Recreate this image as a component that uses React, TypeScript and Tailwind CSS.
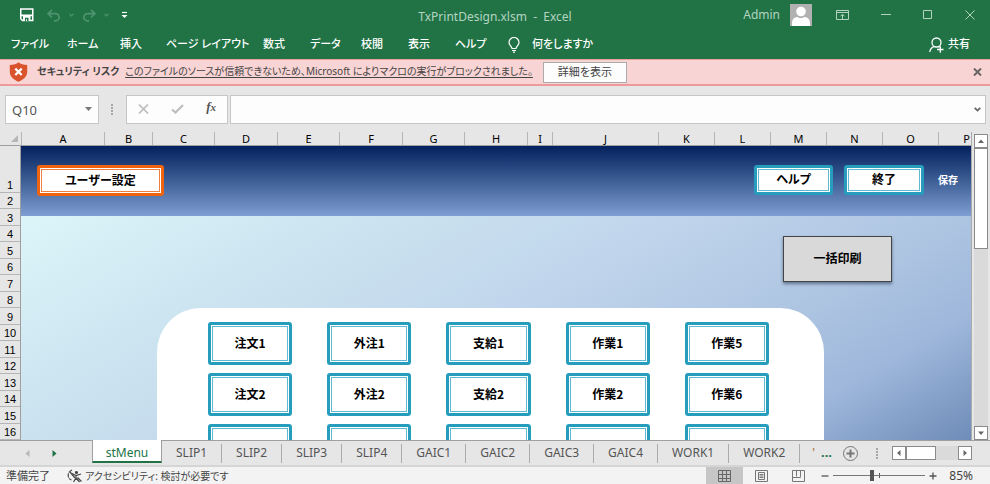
import { useState } from "react";
import type { ReactNode } from "react";

const RIBBON_TABS = [
  { label: "ファイル", width: "w-14" },
  { label: "ホーム", width: "w-[53px]" },
  { label: "挿入", width: "w-[46px]" },
  { label: "ページ レイアウト", width: "w-[97px]" },
  { label: "数式", width: "w-[47px]" },
  { label: "データ", width: "w-[51px]" },
  { label: "校閲", width: "w-[47px]" },
  { label: "表示", width: "w-[47px]" },
  { label: "ヘルプ", width: "w-[53px]" },
];

const COLUMNS = [
  { name: "A", width: "w-[83px]" },
  { name: "B", width: "w-12" },
  { name: "C", width: "w-[62px]" },
  { name: "D", width: "w-[63px]" },
  { name: "E", width: "w-[62px]" },
  { name: "F", width: "w-[63px]" },
  { name: "G", width: "w-[62px]" },
  { name: "H", width: "w-[63px]" },
  { name: "I", width: "w-[25px]" },
  { name: "J", width: "w-[106px]" },
  { name: "K", width: "w-14" },
  { name: "L", width: "w-14" },
  { name: "M", width: "w-14" },
  { name: "N", width: "w-14" },
  { name: "O", width: "w-14" },
  { name: "P", width: "w-14" },
];

const ROWS = Array.from({ length: 16 }, (_, i) => i + 1);

const MENU_ITEMS = [
  "注文1", "外注1", "支給1", "作業1", "作業5",
  "注文2", "外注2", "支給2", "作業2", "作業6",
];

const SHEETS = ["SLIP1", "SLIP2", "SLIP3", "SLIP4", "GAIC1", "GAIC2", "GAIC3", "GAIC4", "WORK1", "WORK2"];

export default function App() {
  return (
    <div className="flex h-screen flex-col overflow-hidden bg-[#e6e6e6] font-['Noto_Sans','Noto_Sans_CJK_JP',sans-serif] text-xs text-[#444] [font-feature-settings:'palt']">
      <TitleBar />
      <RibbonTabs />
      <SecurityBar />
      <FormulaBar />
      <main className="flex min-h-0 flex-1">
        <div className="flex min-w-0 flex-1 flex-col">
          <ColumnHeaders />
          <div className="flex min-h-0 flex-1">
            <RowHeaders />
            <Sheet />
          </div>
        </div>
        <VerticalScrollbar />
      </main>
      <SheetTabs />
      <StatusBar />
    </div>
  );
}

function TitleBar() {
  return (
    <header className="grid h-[30px] shrink-0 grid-cols-[1fr_auto_1fr] bg-[#217346] text-[#b3d3c0]">
      <div className="flex items-center pl-5">
        <button type="button" aria-label="上書き保存">
          <svg width="14" height="14" viewBox="0 0 14 14" className="block">
            <path d="M.75 1h12v11.500H2.500L.75 10.800z" fill="none" stroke="#fff" strokeWidth="1.500" />
            <path d="M.75 6.500h12v1.800h-12zM3 8h7.500v4.500H3z" fill="#fff" />
            <path d="M5 9.700h3.500v3.500H7v-2H6v2H5z" fill="#217346" />
          </svg>
        </button>
        <button type="button" aria-label="元に戻す" className="ml-[13px] flex items-center gap-2 text-[#4f9470]">
          <svg width="14" height="13" viewBox="0 0 14 13" fill="none" stroke="currentColor" strokeWidth="1.700">
            <path d="M5 .8 1 4.600l4 3.800M1 4.600h7.500a3.600 3.600 0 0 1 0 7.200H7" />
          </svg>
          <SmallChevron />
        </button>
        <button type="button" aria-label="やり直し" className="ml-2 flex items-center gap-2 text-[#4f9470]">
          <svg width="14" height="13" viewBox="0 0 14 13" fill="none" stroke="currentColor" strokeWidth="1.700">
            <path d="M9 .8l4 3.800-4 3.800M13 4.600H5.500a3.600 3.600 0 0 0 0 7.200H7" />
          </svg>
          <SmallChevron />
        </button>
        <button type="button" aria-label="クイック アクセス ツール バーのユーザー設定" className="ml-3 text-white">
          <svg width="7" height="8" viewBox="0 0 7 8" className="block">
            <path d="M1 1.500h5" stroke="currentColor" strokeWidth="1.200" />
            <path d="M.5 4h6L3.500 7z" fill="currentColor" />
          </svg>
        </button>
      </div>
      <h1 className="flex items-center pt-1 text-xs whitespace-pre">TxPrintDesign.xlsm  -  Excel</h1>
      <div className="flex items-center justify-end pr-[15px]">
        <span className="mr-2.5">Admin</span>
        <svg width="22" height="22" viewBox="0 0 22 22" className="mr-6 block">
          <path d="M0 0h22v22H0z" fill="#b1b1b1" />
          <circle cx="11" cy="7.500" r="4.800" fill="#fff" />
          <path d="M2 22v-3c0-4 3-6 5.500-6 1 .8 2 1.200 3.500 1.200s2.500-.4 3.500-1.200c2.500 0 5.500 2 5.500 6v3z" fill="#fff" />
        </svg>
        <button type="button" aria-label="リボンの表示オプション" className="mr-8">
          <svg width="13" height="10" viewBox="0 0 13 10" fill="none" stroke="currentColor" className="block">
            <path d="M.5.5h12v9H.5zM.5 2.500h12M6.500 9V4.500M4.500 6.300l2-2 2 2" />
          </svg>
        </button>
        <button type="button" aria-label="最小化" className="mr-8">
          <svg width="10" height="10" viewBox="0 0 10 10" stroke="currentColor" className="block">
            <path d="M0 4.500h10" />
          </svg>
        </button>
        <button type="button" aria-label="最大化" className="mr-8">
          <svg width="10" height="10" viewBox="0 0 10 10" fill="none" stroke="currentColor" className="block">
            <path d="M.5.5h8v8h-8z" />
          </svg>
        </button>
        <button type="button" aria-label="閉じる">
          <svg width="10" height="10" viewBox="0 0 10 10" stroke="currentColor" className="block">
            <path d="M.5.5l9 9M9.500.5l-9 9" />
          </svg>
        </button>
      </div>
    </header>
  );
}

function SmallChevron() {
  return (
    <svg width="5" height="4" viewBox="0 0 5 4" fill="none" stroke="currentColor" strokeWidth="1.200">
      <path d="M.5.800 2.500 2.800 4.500.800" />
    </svg>
  );
}

function RibbonTabs() {
  return (
    <nav className="flex h-[29px] shrink-0 items-center bg-[#217346] pr-5 pl-[11px] text-[11px] font-medium text-white">
      {RIBBON_TABS.map((tab) => (
        <button key={tab.label} type="button" className={`${tab.width} shrink-0 text-left whitespace-nowrap`}>
          {tab.label}
        </button>
      ))}
      <button type="button" className="flex items-center gap-3 whitespace-nowrap">
        <svg width="12" height="16" viewBox="0 0 12 16" fill="none" stroke="currentColor" strokeWidth="1.200">
          <path d="M4 11.500c0-2-3-3-3-6a5 5 0 0 1 10 0c0 3-3 4-3 6zM4 13.500h4M5 15.200h2" />
        </svg>
        何をしますか
      </button>
      <button type="button" className="ml-auto flex items-center gap-1 whitespace-nowrap">
        <svg width="15" height="16" viewBox="0 0 15 16" fill="none" stroke="currentColor" strokeWidth="1.300">
          <circle cx="7.500" cy="5.500" r="4.500" />
          <path d="M.8 15c.4-3 2-4.800 4.400-5.400M9.500 9.500l1 .7M8 12.500h6.500M11.300 9.300v6.400" />
        </svg>
        共有
      </button>
    </nav>
  );
}

function SecurityBar() {
  const [dismissed, setDismissed] = useState(false);

  if (dismissed) return null;

  return (
    <section
      aria-label="セキュリティ リスク"
      className="flex h-[27px] shrink-0 items-center border-t border-b-2 border-t-[#e8a09c] border-b-[#ee9a9b] bg-[#f9d4d4] pr-2 pl-[9px] text-[10px] whitespace-nowrap text-[#444]"
    >
      <svg width="19" height="20" viewBox="0 0 19 20" className="mr-[9px] shrink-0">
        <path d="M9.500.3C7.500 2 4.500 3 .8 3v7c0 4.500 4 8 8.700 9.700C14.200 18 18.200 14.500 18.200 10V3c-3.700 0-6.700-1-8.700-2.700z" fill="#d9532c" />
        <path d="M6.300 6.600l6.400 6.400M12.700 6.600l-6.400 6.400" stroke="#fff" strokeWidth="2.200" />
      </svg>
      <strong className="font-bold">セキュリティ リスク</strong>
      <a href="#security" className="ml-1.5 underline underline-offset-2">
        このファイルのソースが信頼できないため、Microsoft によりマクロの実行がブロックされました。
      </a>
      <button type="button" className="ml-2.5 h-[21px] w-[84px] shrink-0 border border-[#ababab] bg-[#fdfdfd] text-[11px]">
        詳細を表示
      </button>
      <button type="button" aria-label="閉じる" className="ml-auto" onClick={() => setDismissed(true)}>
        <svg width="9" height="8" viewBox="0 0 9 8" stroke="#666" strokeWidth="2" className="block">
          <path d="M1 .5l7 7M8 .5l-7 7" />
        </svg>
      </button>
    </section>
  );
}

function FormulaBar() {
  return (
    <div className="flex h-[46px] shrink-0 items-center pr-1 pl-[5px]">
      <div className="flex h-[29px] w-[94px] items-center border border-[#c6c6c6] bg-[#fdfdfd] pr-1.5 pl-1.5">
        <input
          aria-label="名前ボックス"
          defaultValue="Q10"
          className="min-w-0 flex-1 bg-transparent pt-0.5 text-[13px] leading-5 text-[#555] outline-none"
        />
        <svg width="7" height="4" viewBox="0 0 7 4">
          <path d="M0 0h7L3.500 4z" fill="#777" />
        </svg>
      </div>
      <Grip className="mx-3" />
      <div className="ml-px flex h-[29px] w-[102px] items-center justify-between border border-[#c6c6c6] bg-[#fdfdfd] pr-[11px] pl-[11px]">
        <button type="button" aria-label="キャンセル">
          <svg width="11" height="10" viewBox="0 0 11 10" stroke="#bdbdbd" strokeWidth="1.700" className="block">
            <path d="M1 .5l9 9M10 .5l-9 9" />
          </svg>
        </button>
        <button type="button" aria-label="入力">
          <svg width="13" height="10" viewBox="0 0 13 10" fill="none" stroke="#bdbdbd" strokeWidth="2.200" className="block">
            <path d="M1 5.500l3.500 3L12 1" />
          </svg>
        </button>
        <button
          type="button"
          aria-label="関数の挿入"
          className="pb-1 font-['Liberation_Serif',serif] text-[13px] leading-4 font-bold text-[#555] italic"
        >
          f<span className="text-[11px]">x</span>
        </button>
      </div>
      <div className="ml-0.5 flex h-[29px] min-w-0 flex-1 items-center border border-[#c6c6c6] bg-[#fdfdfd] pr-1 pl-2">
        <input aria-label="数式バー" className="min-w-0 flex-1 bg-transparent text-[13px] outline-none" />
        <svg width="7" height="5" viewBox="0 0 7 5" fill="none" stroke="#666" strokeWidth="1.800">
          <path d="M.7.8l2.800 2.800L6.300.800" />
        </svg>
      </div>
    </div>
  );
}

function Grip({ className }: { className: string }) {
  return (
    <svg width="2" height="11" viewBox="0 0 2 11" fill="#a6a6a6" className={`${className} shrink-0`}>
      <path d="M0 0h2v2H0zM0 3h2v2H0zM0 6h2v2H0zM0 9h2v2H0z" />
    </svg>
  );
}

function ColumnHeaders() {
  return (
    <div className="flex h-3.5 shrink-0 overflow-hidden border-b border-[#9f9f9f] text-[11px] leading-[14px] text-black">
      <div className="flex w-[22px] shrink-0 items-end justify-end border-r border-[#b5b5b5] pr-[3px] pb-[3px]">
        <svg width="7" height="7" viewBox="0 0 7 7">
          <path d="M7 0v7H0z" fill="#b5b5b5" />
        </svg>
      </div>
      {COLUMNS.map((column) => (
        <div key={column.name} className={`${column.width} shrink-0 border-r border-[#b5b5b5] text-center`}>
          {column.name}
        </div>
      ))}
    </div>
  );
}

function RowHeaders() {
  return (
    <div className="w-[21px] shrink-0 overflow-hidden border-r border-[#9f9f9f] text-center font-['Liberation_Sans',sans-serif] text-[11px] leading-[13px] text-black">
      {ROWS.map((row) => (
        <div
          key={row}
          className={`flex items-end justify-center border-b border-[#b5b5b5] ${
            row === 1 ? "h-[47px]" : row % 2 ? "h-[17px]" : "h-4"
          }`}
        >
          {row}
        </div>
      ))}
    </div>
  );
}

function Sheet() {
  return (
    <div className="flex min-w-0 flex-1 flex-col overflow-hidden bg-[linear-gradient(150deg,#dcf5f9_61px,#cce4f0_230px,#c1d6ec_380px,#aec5e2_530px,#9fb7db_620px,#708eba_725px)] font-['Noto_Sans_CJK_JP',sans-serif] font-bold text-black">
      <div className="flex h-[70px] shrink-0 items-start bg-linear-to-b from-[#04215e] to-[#7f9fd2] pt-[19px] pr-[13px] pl-4">
        <ShapeButton tone="orange" className="h-[31px] w-[127px]">ユーザー設定</ShapeButton>
        <ShapeButton className="ml-auto h-[30px] w-[79px]">ヘルプ</ShapeButton>
        <ShapeButton className="ml-[11px] h-[30px] w-20">終了</ShapeButton>
        <button type="button" className="ml-3.5 h-[30px] text-[10px] text-white">保存</button>
      </div>
      <div className="flex shrink-0 justify-end pt-5 pr-[79px]">
        <button type="button" className="h-[46px] w-[109px] border border-[#444] bg-[#d9d9d9] pb-0.5 shadow-[0_2px_3px_rgba(40,60,90,0.6)]">
          一括印刷
        </button>
      </div>
      <div className="mt-[26px] mr-[147px] ml-[136px] grid flex-1 grid-cols-5 content-start gap-x-[35px] gap-y-2 rounded-t-[44px] bg-white pt-3.5 pr-[55px] pl-[51px]">
        {MENU_ITEMS.map((item) => (
          <ShapeButton key={item} className="h-[43px]">{item}</ShapeButton>
        ))}
        {["注文3", "外注3", "支給3", "作業3", "作業7"].map((item) => (
          <ShapeButton key={item} label={item} className="h-[43px]" />
        ))}
      </div>
    </div>
  );
}

type ShapeButtonProps = {
  children?: ReactNode;
  className: string;
  label?: string;
  tone?: "blue" | "orange";
};

function ShapeButton({ children, className, label, tone = "blue" }: ShapeButtonProps) {
  const outer = tone === "orange" ? "border-[#f0640f]" : "border-[#279dbe]";
  const inner = tone === "orange" ? "border-[#ef7f41]" : "border-[#5fb9d1]";

  return (
    <button type="button" aria-label={label} className={`${className} ${outer} rounded-[3px] border-3 bg-white p-px`}>
      <span className={`${inner} flex h-full items-center justify-center border pb-0.5`}>{children}</span>
    </button>
  );
}

function ScrollArrow({ d, label }: { d: string; label: string }) {
  return (
    <button
      type="button"
      aria-label={label}
      className="flex size-3.5 shrink-0 items-center justify-center border border-[#8a8a8a] bg-white"
    >
      <svg width="8" height="8" viewBox="0 0 8 8" fill="#666">
        <path d={d} />
      </svg>
    </button>
  );
}

function VerticalScrollbar() {
  return (
    <div className="flex w-[19px] shrink-0 flex-col items-center border-l border-[#ababab] pt-0.5">
      <ScrollArrow label="上へスクロール" d="M1 6h6L4 2.500z" />
      <div className="flex w-3.5 flex-1 flex-col bg-[#dadada]">
        <div className="h-[101px] border border-[#8a8a8a] bg-white" />
      </div>
      <ScrollArrow label="下へスクロール" d="M1 2.500h6L4 6z" />
    </div>
  );
}

function SheetTabs() {
  return (
    <div className="flex h-[27px] shrink-0 items-start border-b-2 border-[#d5d5d5] whitespace-nowrap text-[#555]">
      <div className="flex h-full w-[92px] shrink-0 items-center gap-[22px] border-t border-[#9f9f9f] pl-[25px]">
        <button type="button" aria-label="前のシート">
          <svg width="5" height="7" viewBox="0 0 5 7" fill="#b8b8b8" className="block">
            <path d="M4.500 0v7L.5 3.500z" />
          </svg>
        </button>
        <button type="button" aria-label="次のシート">
          <svg width="5" height="7" viewBox="0 0 5 7" fill="#217346" className="block">
            <path d="M.5 0v7l4-3.500z" />
          </svg>
        </button>
      </div>
      <button
        type="button"
        className="h-[23px] w-[70px] shrink-0 border-x border-b-2 border-x-[#9f9f9f] border-b-[#217346] bg-white pt-1 text-[#217346]"
      >
        stMenu
      </button>
      <div className="flex h-full min-w-0 flex-1 items-center border-t border-[#9f9f9f]">
        {SHEETS.map((sheet) => (
          <button key={sheet} type="button" className="h-[19px] shrink-0 border-r border-[#ababab] px-3.5 leading-4">
            {sheet}
          </button>
        ))}
        <span className="ml-3 text-[#b5652b]">'</span>
        <button type="button" aria-label="その他のシート" className="ml-1.5 text-[13px] font-bold text-[#217346]">...</button>
        <button type="button" aria-label="新しいシート" className="ml-auto">
          <svg width="15" height="15" viewBox="0 0 15 15" fill="none" stroke="#777" className="block">
            <circle cx="7.500" cy="7.500" r="7" />
            <path d="M3.500 7.500h8M7.500 3.500v8" strokeWidth="2" />
          </svg>
        </button>
        <Grip className="mr-3.5 ml-[18px]" />
        <div className="mr-[18px] flex h-3.5 w-20 shrink-0 bg-[#dadada]">
          <ScrollArrow label="左へスクロール" d="M5.500 1v6L2 4z" />
          <div className="h-full w-[30px] border border-[#8a8a8a] bg-white" />
          <div className="flex-1" />
          <ScrollArrow label="右へスクロール" d="M2.500 1v6L6 4z" />
        </div>
      </div>
    </div>
  );
}

function StatusBar() {
  return (
    <footer className="flex h-[17px] shrink-0 items-center bg-[#f3f3f3] pr-[17px] pl-1.5 text-[11px] leading-4 whitespace-nowrap text-[#444]">
      <span>準備完了</span>
      <button type="button" className="ml-[17px] flex items-center gap-0.5 text-[10px]">
        <svg width="16" height="14" viewBox="0 0 16 14" fill="none" stroke="currentColor" strokeWidth="1.200">
          <path d="M5 1C2.500 2 1 4 1.200 6.800c.2 2 1.500 3.500 3.300 4.200" strokeDasharray="4 1" />
          <path d="M5 4.500l4 2 5-1.500M9 6.500v2.500l-2.500 4M9 9l3.500 4M10.500 8.500l4 4" />
          <circle cx="9.500" cy="3.500" r="1" fill="currentColor" />
          <path d="M3 3l5 6" />
        </svg>
        アクセシビリティ: 検討が必要です
      </button>
      <div className="ml-auto flex h-full">
        <button type="button" aria-label="標準" className="flex w-[37px] items-center justify-center bg-[#c6c6c6]">
          <svg width="13" height="12" viewBox="0 0 13 12" fill="none" stroke="#666" className="block">
            <path d="M.5.5h12v11H.5zM4.500.5v11M8.500.5v11M.5 4.500h12M.5 8.500h12" />
          </svg>
        </button>
        <button type="button" aria-label="ページ レイアウト" className="flex w-[37px] items-center justify-center">
          <svg width="13" height="12" viewBox="0 0 13 12" fill="none" stroke="#777" className="block">
            <path d="M.5.5h12v11H.5zM3.500 2.500h6v7h-6zM4.500 4.500h4M4.500 6h4M4.500 7.500h4" />
          </svg>
        </button>
        <button type="button" aria-label="改ページ プレビュー" className="flex w-[37px] items-center justify-center">
          <svg width="13" height="12" viewBox="0 0 13 12" fill="none" stroke="#777" className="block">
            <path d="M.5.5h12v11H.5zM4.500.5v6M8.500.5v6M.5 7.500h8v-1" />
          </svg>
        </button>
      </div>
      <button type="button" aria-label="縮小" className="ml-1">
        <svg width="8" height="8" viewBox="0 0 8 8" stroke="#555" strokeWidth="1.300" className="block">
          <path d="M.5 4h7" />
        </svg>
      </button>
      <input
        type="range"
        aria-label="ズーム"
        min={10}
        max={190}
        defaultValue={85}
        className="mx-1 h-3 w-[92px] appearance-none bg-[linear-gradient(#777,#777),linear-gradient(#555,#555)] bg-[size:100%_1px,1px_5px] bg-center bg-no-repeat [&::-webkit-slider-thumb]:h-[11px] [&::-webkit-slider-thumb]:w-1 [&::-webkit-slider-thumb]:appearance-none [&::-webkit-slider-thumb]:bg-[#555]"
      />
      <button type="button" aria-label="拡大">
        <svg width="8" height="8" viewBox="0 0 8 8" stroke="#555" strokeWidth="1.300" className="block">
          <path d="M.5 4h7M4 .5v7" />
        </svg>
      </button>
      <span className="ml-3 text-xs leading-4">85%</span>
    </footer>
  );
}
